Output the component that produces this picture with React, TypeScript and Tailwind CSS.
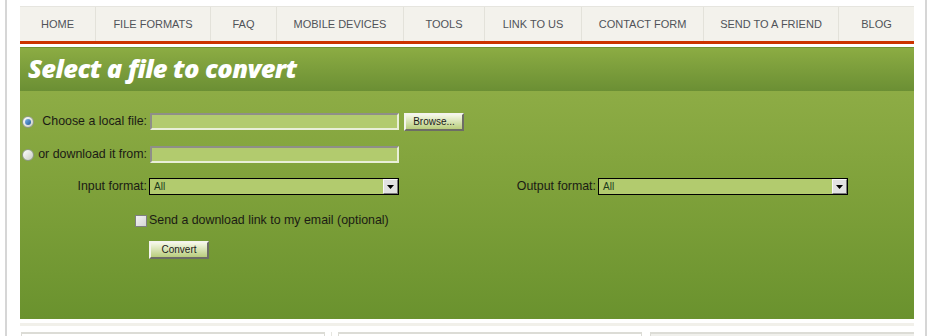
import React from 'react'

const NAV = [
  { label: 'HOME', w: 'w-[76px]' },
  { label: 'FILE FORMATS', w: 'w-[115px]' },
  { label: 'FAQ', w: 'w-[66px]' },
  { label: 'MOBILE DEVICES', w: 'w-[127px]' },
  { label: 'TOOLS', w: 'w-[81px]' },
  { label: 'LINK TO US', w: 'w-[97px]' },
  { label: 'CONTACT FORM', w: 'w-[122px]' },
  { label: 'SEND TO A FRIEND', w: 'w-[135px]' },
  { label: 'BLOG', w: 'w-[75px]' },
]

function Radio({ checked }: { checked?: boolean }) {
  return (
    <span className="w-[12px] h-[12px] rounded-full border border-[#8f9a86] bg-gradient-to-br from-[#ffffff] to-[#c9cdc4] flex items-center justify-center shrink-0">
      {checked && <span className="w-[6px] h-[6px] rounded-full bg-gradient-to-br from-[#7fb6ec] to-[#1f5b9a]" />}
    </span>
  )
}

function TextBox() {
  return (
    <div className="w-[249px] h-[17px] bg-[#b2cb6e] border-2 border-t-[#8f8f88] border-l-[#8f8f88] border-b-[#e9efd8] border-r-[#e9efd8]" />
  )
}

function Select() {
  return (
    <div className="w-[250px] h-[17px] bg-[#b2cb6e] border border-black flex items-center">
      <span className="flex-1 pl-[4px] text-[10px] text-[#1e3b1a]">All</span>
      <span className="w-[15px] h-[15px] bg-[#e2e2e2] border border-t-[#f8f8f8] border-l-[#f8f8f8] border-b-[#7a7a7a] border-r-[#7a7a7a] flex items-center justify-center">
        <svg width="7" height="4" viewBox="0 0 7 4"><path d="M0 0h7L3.5 4z" fill="#000" /></svg>
      </span>
    </div>
  )
}

function Button({ label, w }: { label: string; w: string }) {
  return (
    <button className={`${w} h-[18px] text-[10px] text-[#1a1a1a] bg-gradient-to-b from-[#f4f7e4] to-[#b9cd7c] border-2 border-t-[#f4f4ee] border-l-[#f4f4ee] border-b-[#6d6d66] border-r-[#6d6d66] leading-none`}>
      {label}
    </button>
  )
}

export default function App() {
  return (
    <div className="w-[945px] h-[336px] overflow-hidden bg-white font-['Liberation_Sans',Arial,sans-serif]">
      <div className="ml-[5px] w-[922px] h-[336px] border-l-2 border-r-2 border-[#d6d6d6] pl-[13px]">
        <div className="w-[894px] pt-[6px]">
          {/* Nav */}
          <div className="flex h-[35px] bg-[#f3f2ec] border-t border-[#e6e5df]">
            {NAV.map((n, i) => (
              <div
                key={n.label}
                className={`${n.w} flex items-center justify-center text-[11px] text-[#505258] ${i < NAV.length - 1 ? 'border-r border-[#e3e2da]' : ''}`}
              >
                {n.label}
              </div>
            ))}
          </div>
          <div className="h-[3px] bg-[#cc3300]" />

          {/* Converter panel */}
          <div className="mt-[3px] h-[272px] bg-gradient-to-b from-[#94b14a] via-[#80a23b] to-[#6a922e]">
            <div className="h-[44px] bg-gradient-to-b from-[#8cac43] to-[#6b8f34] border-t border-[#6f9336] flex items-center pl-[8px]">
              <h1 className="text-white italic font-extrabold text-[25.5px] tracking-[-0.6px] font-['Open_Sans',sans-serif] leading-none pb-[2px]">
                Select a file to convert
              </h1>
            </div>

            <div className="pt-[22px] text-[12.4px] leading-none text-[#1b1b14]">
              <div className="flex items-center h-[17px]">
                <div className="w-[130px] flex items-center pl-[2px] pr-[3px]">
                  <Radio checked />
                  <span className="flex-1 text-right">Choose a local file:</span>
                </div>
                <TextBox />
                <div className="ml-[5px]">
                  <Button label="Browse..." w="w-[60px]" />
                </div>
              </div>

              <div className="flex items-center h-[17px] mt-[16px]">
                <div className="w-[130px] flex items-center pl-[2px] pr-[3px]">
                  <Radio />
                  <span className="flex-1 text-right">or download it from:</span>
                </div>
                <TextBox />
              </div>

              <div className="flex items-center h-[17px] mt-[15px]">
                <div className="w-[129px] text-right pr-[2px]">Input format:</div>
                <Select />
                <div className="w-[199px] text-right pr-[2px]">Output format:</div>
                <Select />
              </div>

              <div className="flex items-center h-[17px] mt-[17px] pl-[115px]">
                <span className="w-[12px] h-[12px] border border-[#7f7f7f] bg-gradient-to-br from-[#f2f2f2] to-[#d5d5d5]" />
                <span className="ml-[2px]">Send a download link to my email (optional)</span>
              </div>

              <div className="mt-[12px] pl-[129px]">
                <Button label="Convert" w="w-[60px]" />
              </div>
            </div>
          </div>

          {/* Footer strips */}
          <div className="mt-[4px] h-[3px] bg-[#f1f0ea]" />
          <div className="mt-[6px] flex">
            <div className="ml-[1px] w-[304px] h-[10px] border-t-2 border-l border-r border-[#dcdcd6]" />
            <div className="ml-[6px] w-[1px] h-[10px] bg-[#e6e6e0]" />
            <div className="ml-[6px] w-[304px] h-[10px] border-t-2 border-l border-r border-[#dcdcd6]" />
            <div className="ml-[8px] w-[264px] h-[10px] border-t-2 border-l border-[#dcdcd6] bg-[#f0f0ec]" />
          </div>
        </div>
      </div>
    </div>
  )
}
